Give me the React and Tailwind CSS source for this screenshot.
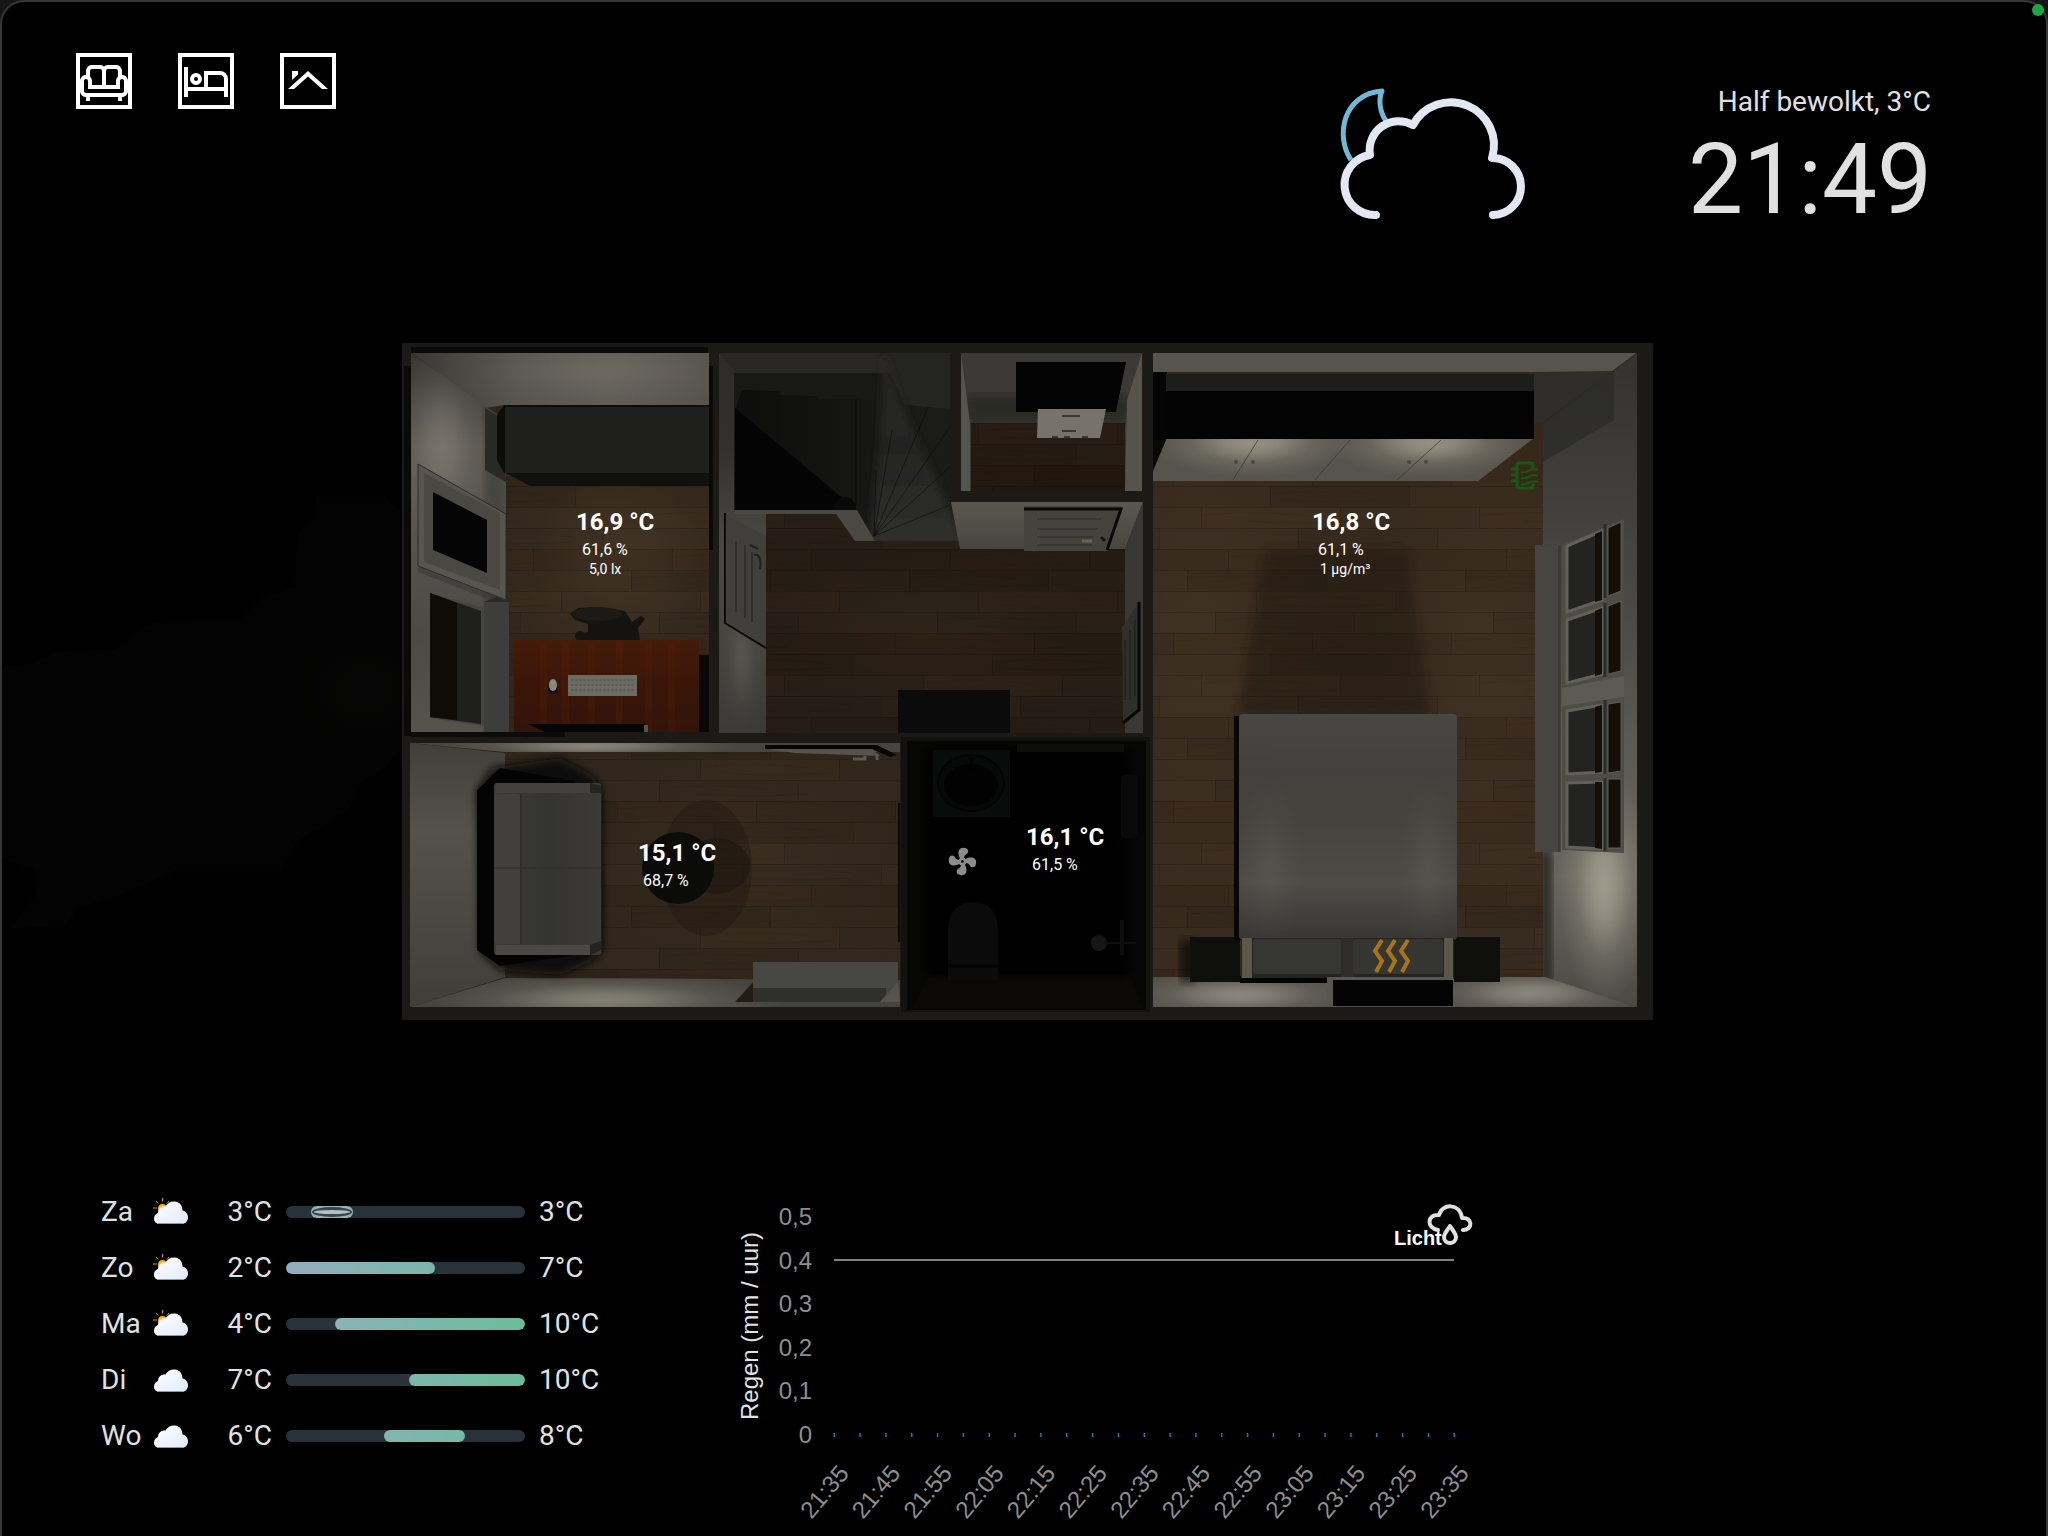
import React from "react";

const SOFA =
  "M21 9V7C21 5.35 19.65 4 18 4H14C13.23 4 12.53 4.3 12 4.78C11.47 4.3 10.77 4 10 4H6C4.35 4 3 5.35 3 7V9C1.35 9 0 10.35 0 12V17C0 18.65 1.35 20 3 20V22H5V20H19V22H21V20C22.65 20 24 18.65 24 17V12C24 10.35 22.65 9 21 9M14 6H18C18.55 6 19 6.45 19 7V9.78C18.39 10.33 18 11.12 18 12V14H13V7C13 6.45 13.45 6 14 6M5 7C5 6.45 5.45 6 6 6H10C10.55 6 11 6.45 11 7V14H6V12C6 11.12 5.61 10.33 5 9.78V7M22 17C22 17.55 21.55 18 21 18H3C2.45 18 2 17.55 2 17V12C2 11.45 2.45 11 3 11C3.55 11 4 11.45 4 12V16H20V12C20 11.45 20.45 11 21 11C21.55 11 22 11.45 22 12V17Z";
const BED =
  "M7 14A3 3 0 1 0 4 11A3 3 0 0 0 7 14M7 10A1 1 0 1 1 6 11A1 1 0 0 1 7 10M19 7H11V15H3V5H1V20H3V17H21V20H23V11A4 4 0 0 0 19 7M21 15H13V9H19A2 2 0 0 1 21 11Z";
const ROOF = "M12 7L2 16H5L12 9.7L19 16H22L12 7M7 7V8.8L4 11.5V7H7Z";
const FAN =
  "M12 11A1 1 0 0 0 11 12A1 1 0 0 0 12 13A1 1 0 0 0 13 12A1 1 0 0 0 12 11M12.5 2C17 2 17.11 5.57 14.75 6.75C13.76 7.24 13.32 8.29 13.13 9.22C13.61 9.42 14.03 9.73 14.35 10.13C18.05 8.13 22.03 8.92 22.03 12.5C22.03 17 18.46 17.1 17.28 14.73C16.78 13.74 15.72 13.3 14.79 13.11C14.59 13.59 14.28 14 13.88 14.34C15.87 18.03 15.08 22 11.5 22C7 22 6.91 18.42 9.27 17.24C10.25 16.75 10.69 15.71 10.89 14.79C10.4 14.59 9.97 14.27 9.65 13.87C5.96 15.85 2 15.07 2 11.5C2 7 5.56 6.89 6.74 9.26C7.24 10.25 8.29 10.68 9.22 10.87C9.41 10.39 9.73 9.97 10.14 9.65C8.15 5.96 8.94 2 12.5 2Z";

const NAV = [
  { label: "Woonkamer", d: SOFA },
  { label: "Slaapkamer", d: BED },
  { label: "Zolder", d: ROOF },
];

function Header() {
  return (
    <header className="flex items-start pt-[51px] pl-[74px] pr-[115px]">
      <nav className="flex gap-[46px]">
        {NAV.map((n) => (
          <button key={n.label} type="button" aria-label={n.label} className="size-14 border-4 border-white text-white">
            <svg viewBox="0 0 24 24" className="size-12" fill="currentColor">
              <path d={n.d} fillRule="evenodd" />
            </svg>
          </button>
        ))}
      </nav>
      <div className="mt-[29px] ml-auto flex items-start">
        <svg viewBox="1336 84 194 140" className="mt-0.5 h-[140px] w-[194px]" fill="none" aria-hidden="true">
          <path d="M1351 160C1335 136 1343 94 1382 91C1378 100 1380 112 1386 121" stroke="#71b7d6" strokeWidth="5" strokeLinejoin="round" />
          <path
            d="M1376 215A30.2 30.2 0 0 1 1370 155A29 29 0 0 1 1413 125A43 43 0 0 1 1492 158A28.5 28.5 0 0 1 1493 215"
            stroke="#e2e8f2"
            strokeWidth="8"
            fill="#000"
            strokeLinecap="round"
            strokeLinejoin="round"
          />
        </svg>
        <div className="ml-[158px] w-[243px] text-right text-[#e1e1e1]">
          <div className="text-[28px] leading-10 whitespace-nowrap">Half bewolkt, 3°C</div>
          <div className="text-[98px] leading-[116px] whitespace-nowrap">21:49</div>
        </div>
      </div>
    </header>
  );
}

const P = ({ p, f, ...r }) => <polygon points={p} fill={f} {...r} />;
const R = ({ b, f, ...r }) => <rect x={b[0]} y={b[1]} width={b[2] - b[0]} height={b[3] - b[1]} fill={f} {...r} />;

function Glow({ id, color, o = 1 }) {
  return (
    <radialGradient id={id}>
      <stop offset="0" stopColor={color} stopOpacity={o} />
      <stop offset="0.25" stopColor={color} stopOpacity={o * 0.8} />
      <stop offset="0.6" stopColor={color} stopOpacity={o * 0.28} />
      <stop offset="1" stopColor={color} stopOpacity="0" />
    </radialGradient>
  );
}

function Linear({ id, v, stops }) {
  return (
    <linearGradient id={id} x1="0" y1="0" x2={v ? 0 : 1} y2={v ? 1 : 0}>
      {stops.map((s, i) => (
        <stop key={i} offset={i / (stops.length - 1)} stopColor={s} />
      ))}
    </linearGradient>
  );
}

const ROWS = [0, 97, 28, 125, 55, 14, 83, 42];

function Defs() {
  return (
    <defs>
      <pattern id="planks" x="1173" y="465" width="278" height="168" patternUnits="userSpaceOnUse">
        {ROWS.map((x, i) => (
          <g key={i}>
            <rect x="0" y={i * 21} width="278" height="21" fill="#fff" opacity={((i * 5) % 4) * 0.007} />
            <rect x={x} y={i * 21} width="139" height="21" fill={i % 2 ? "#000" : "#b86a20"} opacity={i % 2 ? 0.06 : 0.02} />
            <rect x="0" y={i * 21} width="278" height="1" fill="#000" opacity="0.16" />
            <rect x={x} y={i * 21} width="1" height="21" fill="#000" opacity="0.16" />
            <rect x={x + 139} y={i * 21} width="1" height="21" fill="#000" opacity="0.16" />
            <path d={`M${x} ${i * 21 + 8}q60 -5 110 1M${x / 2 + 60} ${i * 21 + 14}q50 4 110 0`} stroke="#000" strokeOpacity="0.08" fill="none" />
          </g>
        ))}
      </pattern>
      <Glow id="gWall" color="#8b877c" />
      <Glow id="gBright" color="#a5a192" />
      <Glow id="gFloor" color="#53402a" o={0.5} />
      <Glow id="gHaze" color="#0c0b09" o={0.9} />
      <Linear id="lBack" stops={["#3a3935", "#55534c", "#5f5c55", "#55534c"]} />
      <Linear id="lLeft" v stops={["#363531", "#5a5750", "#55534d", "#4c4a45", "#55534c"]} />
      <Linear id="lHallL" v stops={["#2d2c28", "#32312d", "#4a4842", "#45443f", "#3b3a36"]} />
      <Linear id="lStair" stops={["#0d0d0d", "#121211", "#181817", "#1c1c1a"]} />
      <Linear id="lBeam" v stops={["#2a2926", "#242422", "#30302d"]} />
      <Linear id="lLivL" v stops={["#403f3a", "#55524b", "#4a4842", "#3f3e38"]} />
      <Linear id="lRight" v stops={["#33322f", "#3f3e3b", "#4b4a46", "#5c5a54", "#68655d", "#4b4943"]} />
      <Linear id="lBed" v stops={["#484743", "#42413d", "#45443f", "#4e4c47", "#383733"]} />
      <Linear id="lSofa" stops={["#3c3b37", "#343430", "#3b3a36"]} />
      <Linear id="lDesk" v stops={["#451b09", "#3a1608", "#33130a"]} />
      <Linear id="lDim" v stops={["#5b584f", "#47453f"]} />
      <clipPath id="cOffice"><path d="M411 353H709V732H411Z" /></clipPath>
      <clipPath id="cBedroom"><path d="M1153 353H1637V1007H1153Z" /></clipPath>
      <clipPath id="cLiving"><path d="M410 743H900V1007H410Z" /></clipPath>
      <clipPath id="cLivingLow"><path d="M410 1007L505 978H900V1007Z" /></clipPath>
      <clipPath id="cLivingTop"><path d="M410 743H900V752H505Z" /></clipPath>
      <clipPath id="cBedLow"><path d="M1153 977H1545L1637 1007H1153Z" /></clipPath>
      <clipPath id="cCloset"><path d="M1166 439H1533L1478 481H1153V472Z" /></clipPath>
      <clipPath id="cBack"><path d="M412 353H709V405H504L485 408Z" /></clipPath>
      <clipPath id="cLeft"><path d="M411 353L485 406L506 420V732H411Z" /></clipPath>
      <clipPath id="cRight"><path d="M1637 353L1543 423V977L1637 1007Z" /></clipPath>
      <clipPath id="cStair"><path d="M719 353H950V505L960 541H875L857 510H719Z" /></clipPath>
      <filter id="soft"><feGaussianBlur stdDeviation="4" /></filter>
    </defs>
  );
}

function Office() {
  return (
    <g clipPath="url(#cOffice)">
      <R b={[411, 353, 709, 732]} f="#2f2419" />
      <ellipse cx="620" cy="560" rx="140" ry="150" fill="url(#gFloor)" opacity="0.8" />
      <R b={[500, 460, 709, 732]} f="url(#planks)" />
      <P p="412,353 709,353 709,405 504,405 485,408" f="url(#lBack)" />
      <g clipPath="url(#cBack)">
        <ellipse cx="600" cy="372" rx="170" ry="40" fill="url(#gWall)" opacity="0.3" />
      </g>
      <P p="411,353 485,406 506,420 506,732 411,732" f="url(#lLeft)" />
      <g clipPath="url(#cLeft)">
        <ellipse cx="442" cy="448" rx="50" ry="110" fill="url(#gWall)" opacity="0.6" />
        <R b={[485, 400, 506, 732]} f="#2a2926" opacity="0.35" filter="url(#soft)" />
      </g>
      <P p="485,408 504,420 506,482 485,470" f="#2a2927" />
      <P p="497,415 504,405 709,405 709,473 504,473 497,460" f="#0c0c0b" />
      <R b={[505, 407, 709, 473]} f="#1f1f1e" />
      <P p="506,473 709,473 709,486 530,486" f="#10100f" />
      <P p="418,464 506,514 506,600 418,566" f="#58554e" stroke="#2b2a27" strokeWidth="1" />
      <P p="424,473 500,513 500,590 424,562" f="#4a4842" />
      <P p="433,492 487,520 487,573 433,550" f="#050505" />
      <P p="418,566 506,600 506,606 418,572" f="#333" opacity="0.5" />
      <P p="430,593 484,608 484,726 430,718" f="#45443f" />
      <P p="430,593 481,611 481,724 430,717" f="#1f1f1e" />
      <P p="430,593 457,603 457,720 430,717" f="#0f0c08" />
      <R b={[484, 602, 509, 732]} f="#3d3d3b" />
      <P p="484,602 496,597 509,602" f="#2b2a28" />
      <P p="570,614 578,608 600,607 625,611 632,622 641,616 645,619 638,628 640,640 577,640 577,634 588,632 588,624 575,620" f="#15130f" />
      <ellipse cx="597" cy="614" rx="25" ry="7" fill="#1b1a17" />
      <ellipse cx="580" cy="636" rx="5" ry="5" fill="#15130f" />
      <R b={[514, 640, 699, 732]} f="url(#lDesk)" />
      {[540, 562, 588, 616, 645, 668].map((x) => (
        <R key={x} b={[x, 641, x + 7, 732]} f="#5c250c" opacity="0.18" />
      ))}
      <R b={[699, 655, 709, 732]} f="#0a0806" />
      <P p="528,724 645,724 648,732 545,732" f="#060504" />
      <R b={[644, 725, 648, 732]} f="#555" />
      <ellipse cx="553" cy="690" rx="5" ry="4" fill="#111" />
      <ellipse cx="553" cy="685" rx="4" ry="6" fill="#8b8984" />
      <R b={[568, 675, 637, 696]} f="#6c6a65" />
      {[680, 685, 690].map((y) => (
        <path key={y} d={`M571 ${y}H634`} stroke="#55534f" strokeDasharray="3 1" />
      ))}
    </g>
  );
}

function Hall() {
  return (
    <g>
      <R b={[719, 353, 1143, 733]} f="#241b12" />
      <ellipse cx="930" cy="630" rx="170" ry="90" fill="url(#gFloor)" opacity="0.25" />
      <R b={[760, 510, 1130, 733]} f="url(#planks)" />
      <g clipPath="url(#cStair)">
        <R b={[719, 353, 960, 545]} f="#1a1a18" />
        <R b={[719, 353, 950, 373]} f="#282724" />
        <P p="735,373 880,373 895,410 735,410" f="#181817" />
        <P p="735,410 742,390 780,391 781,395 818,396 819,399 856,399 891,402 928,407 950,409 960,545 735,545" f="url(#lStair)" />
        <P p="880,353 950,353 950,409 905,405" f="#242421" />
        <P p="884,353 900,400 965,545 870,545 880,440" f="url(#lBeam)" filter="url(#soft)" />
        {[[950, 505], [950, 467], [950, 427], [928, 407], [892, 430], [876, 470]].map(([x, y]) => (
          <path key={`${x}-${y}`} d={`M874 536L${x} ${y}`} stroke="#0c0c0c" strokeOpacity="0.6" strokeWidth="1" />
        ))}
        <path d="M856 399V505" stroke="#0c0c0c" />
        <P p="735,408 845,500 857,510 735,510" f="#040404" />
        <circle cx="845" cy="508" r="11" fill="#090909" />
      </g>
      <P p="719,353 734,370 734,510 766,514 766,733 719,733" f="url(#lHallL)" />
      <ellipse cx="742" cy="660" rx="22" ry="70" fill="url(#gWall)" opacity="0.25" />
      <P p="735,510 857,510 875,541 855,541 836,514 735,514" f="#4a4843" />
      <P p="727,516 766,536 766,646 727,622" f="#403f3b" />
      <path d="M725 513V623L766 648" fill="none" stroke="#0b0b0a" strokeWidth="2" />
      <path d="M736 541V612M745 545V618M752 552V622" stroke="#22211f" strokeWidth="1" />
      <path d="M750 545l8 4M754 555q8 -2 6 14" stroke="#22211f" strokeWidth="2" fill="none" />
      <P p="951,502 1143,502 1125,549 960,549" f="url(#lDim)" />
      <P p="1024,506 1122,506 1108,551 1024,551" f="#45433e" />
      <path d="M1024 509H1121L1107 550" fill="none" stroke="#080807" strokeWidth="3" />
      <path d="M1037 519H1101M1037 529H1098M1037 537H1094M1037 545H1092" stroke="#2c2b28" strokeWidth="1" />
      <path d="M1082 541h10" stroke="#66635b" strokeWidth="3" />
      <path d="M1101 537l4 4" stroke="#161614" strokeWidth="3" />
      <P p="1143,502 1125,549 1125,733 1143,733" f="#393834" />
      <P p="1122,627 1138,604 1138,711 1123,722" f="#2f2f2c" />
      <path d="M1139 602V710L1123 723" fill="none" stroke="#060606" strokeWidth="3" />
      <path d="M1125 640V700M1130 630V700M1135 620V696" stroke="#1a1a18" />
      <R b={[898, 690, 1010, 733]} f="#0b0b0b" />

      <R b={[950, 343, 961, 502]} f="#1b1a16" />
      <R b={[950, 491, 1153, 502]} f="#1b1a16" />
      <R b={[961, 353, 1142, 491]} f="#3a3935" />
      <R b={[965, 395, 1130, 423]} f="#22211f" opacity="0.6" filter="url(#soft)" />
      <R b={[971, 423, 1125, 491]} f="#21170e" />
      <R b={[971, 423, 1125, 491]} f="url(#planks)" />
      <P p="961,353 970,423 970,491 961,491" f="#55534d" />
      <P p="1142,353 1127,400 1125,491 1142,491" f="#55534c" />
      <P p="1016,362 1126,362 1116,412 1016,412" f="#040404" />
      <P p="1038,409 1106,409 1100,438 1037,438" f="#77736b" />
      <path d="M1062 416h18M1062 431h14M1052 437h6M1064 437h6M1082 437h6" stroke="#3b3830" strokeWidth="2" />
    </g>
  );
}

function WindowPane({ a, mid, b }) {
  return (
    <g>
      <P p={a} f="#232321" stroke="#62605a" strokeWidth="3" />
      <P p={mid} f="#140f09" />
      <P p={b} f="#140f09" stroke="#5c5a54" strokeWidth="1" />
    </g>
  );
}

function Bedroom() {
  return (
    <g clipPath="url(#cBedroom)">
      <R b={[1153, 353, 1637, 1007]} f="#35281b" />
      <ellipse cx="1200" cy="640" rx="130" ry="300" fill="url(#gFloor)" opacity="0.4" />
      <ellipse cx="1490" cy="680" rx="120" ry="300" fill="url(#gFloor)" opacity="0.4" />
      <R b={[1153, 480, 1546, 978]} f="url(#planks)" />
      <P p="1265,550 1407,550 1430,716 1238,716" f="#1d160f" opacity="0.45" filter="url(#soft)" />
      <P p="1153,353 1637,353 1614,372 1153,372" f="#57544d" />
      <P p="1534,372 1614,371 1542,423 1534,423" f="#2e2d2a" />
      <R b={[1153, 372, 1167, 440]} f="#050505" />
      <R b={[1166, 374, 1534, 391]} f="#1e1d1b" />
      <R b={[1166, 391, 1534, 439]} f="#030303" />
      <P p="1166,439 1533,439 1478,481 1153,481 1153,472" f="#57544d" />
      <g clipPath="url(#cCloset)">
        <ellipse cx="1252" cy="443" rx="100" ry="34" fill="url(#gBright)" opacity="0.8" />
        <ellipse cx="1430" cy="443" rx="100" ry="34" fill="url(#gBright)" opacity="0.8" />
      </g>
      <P p="1153,440 1166,440 1153,470" f="#0b0906" />
      <path d="M1258 440L1233 480M1350 440L1315 480M1441 440L1397 480" stroke="#35332e" strokeOpacity="0.7" />
      {[1236, 1253, 1409, 1426].map((x) => (
        <circle key={x} cx={x} cy="462" r="2" fill="#4b4842" />
      ))}
      <g clipPath="url(#cRight)">
        <R b={[1543, 353, 1637, 1007]} f="url(#lRight)" />
        <P p="1543,423 1614,371 1614,420 1543,462" f="#2a2927" opacity="0.7" />
        <ellipse cx="1604" cy="885" rx="46" ry="120" fill="url(#gBright)" opacity="0.9" />
        <R b={[1540, 850, 1552, 985]} f="#2a2926" filter="url(#soft)" />
      </g>
      <path d="M1637 353L1543 423" stroke="#2a2926" />
      <P p="1562,545 1624,519 1624,853 1562,850" f="#4e4c47" />
      <R b={[1535, 545, 1560, 852]} f="#464541" />
      <R b={[1558, 545, 1561, 852]} f="#35342f" opacity="0.6" />
      <WindowPane a="1567,546 1602,531 1602,600 1567,612" mid="1595,534 1602,531 1602,600 1595,602" b="1608,528 1621,522 1621,591 1608,596" />
      <WindowPane a="1567,620 1602,608 1602,674 1567,683" mid="1595,611 1602,608 1602,674 1595,676" b="1608,606 1621,601 1621,671 1608,674" />
      <P p="1562,688 1624,676 1624,697 1562,706" f="#5c5a54" />
      <WindowPane a="1567,711 1602,705 1602,772 1567,774" mid="1595,707 1602,705 1602,772 1595,773" b="1608,704 1621,702 1621,771 1608,773" />
      <WindowPane a="1567,783 1602,782 1602,849 1567,847" mid="1595,782 1602,782 1602,849 1595,848" b="1608,779 1621,779 1621,848 1608,848" />
      <path d="M1605 524V598M1605 603V677M1605 700V774M1605 778V851" stroke="#2c2c2a" strokeWidth="3" />
      <P p="1153,977 1545,977 1637,1007 1153,1007" f="#504d47" />
      <g clipPath="url(#cBedLow)">
        <ellipse cx="1240" cy="995" rx="120" ry="26" fill="url(#gWall)" />
        <ellipse cx="1530" cy="993" rx="110" ry="26" fill="url(#gWall)" />
      </g>
      <R b={[1180, 940, 1195, 982]} f="#000" opacity="0.6" filter="url(#soft)" />
      <R b={[1190, 937, 1240, 982]} f="#0f0f0e" />
      <R b={[1454, 937, 1500, 982]} f="#0f0f0e" />
      <R b={[1234, 716, 1242, 940]} f="#080706" />
      <R b={[1239, 714, 1457, 940]} f="url(#lBed)" rx="4" />
      <ellipse cx="1270" cy="865" rx="32" ry="90" fill="url(#gWall)" opacity="0.14" />
      <ellipse cx="1428" cy="865" rx="28" ry="90" fill="url(#gWall)" opacity="0.14" />
      <R b={[1240, 976, 1340, 983]} f="#030303" />
      <R b={[1241, 938, 1454, 978]} f="#25241f" />
      <R b={[1242, 938, 1252, 978]} f="#5c5849" />
      <R b={[1444, 938, 1453, 978]} f="#5c5849" />
      <R b={[1253, 939, 1342, 974]} f="#363633" rx="3" />
      <R b={[1353, 939, 1443, 974]} f="#353531" rx="3" />
      <R b={[1341, 938, 1353, 978]} f="#2f2d29" />
      <P p="1327,977 1453,977 1453,1005 1333,1005 1327,1002" f="#57554f" />
      <R b={[1333, 980, 1453, 1006]} f="#040404" />
    </g>
  );
}

function Living() {
  return (
    <g clipPath="url(#cLiving)">
      <R b={[410, 743, 900, 1007]} f="#2d2318" />
      <ellipse cx="740" cy="860" rx="220" ry="160" fill="url(#gFloor)" opacity="0.4" />
      <R b={[500, 750, 900, 982]} f="url(#planks)" />
      <P p="410,743 900,743 900,752 505,752" f="#47453f" />
      <g clipPath="url(#cLivingTop)">
        <ellipse cx="590" cy="746" rx="150" ry="14" fill="url(#gBright)" opacity="0.7" />
      </g>
      <P p="410,743 505,753 505,977 410,1007" f="url(#lLivL)" />
      <P p="410,1007 505,978 900,980 900,1007" f="#45433d" />
      <g clipPath="url(#cLivingLow)">
        <ellipse cx="605" cy="1000" rx="180" ry="28" fill="url(#gBright)" opacity="0.65" />
      </g>
      <P p="477,790 492,768 560,758 592,775 602,790 602,950 590,962 560,975 500,970 480,952" f="#0e0b08" filter="url(#soft)" />
      <P p="477,790 500,768 575,781 575,955 500,966 477,950" f="#030303" />
      <R b={[494, 783, 601, 955]} f="url(#lSofa)" rx="3" />
      <R b={[496, 783, 590, 793]} f="#42413d" />
      <R b={[496, 945, 590, 955]} f="#494843" />
      <P p="590,783 601,786 601,793 590,793" f="#242422" />
      <P p="590,945 601,941 601,950 590,955" f="#242422" />
      <R b={[494, 794, 521, 944]} f="#41403c" rx="4" />
      <path d="M494 868H601" stroke="#2d2d2a" />
      <path d="M521 794V944" stroke="#2e2e2b" strokeWidth="2" />
      <ellipse cx="706" cy="868" rx="46" ry="68" fill="#1c150f" opacity="0.35" />
      <ellipse cx="716" cy="866" rx="34" ry="28" fill="#120e0a" opacity="0.35" />
      <circle cx="678" cy="868" r="36" fill="#0b0b0a" />
      <P p="765,745 877,745 897,755 890,757 872,749 765,749" f="#060606" />
      <P p="765,749 872,749 880,756 795,753" f="#55534e" />
      <path d="M853 759h12v-3M877 754v6" stroke="#5b5952" strokeWidth="3" fill="none" />
      <R b={[898, 803, 900, 942]} f="#0a0a09" />
      <P p="735,1002 755,980 755,1002" f="#241c12" />
      <R b={[753, 962, 898, 988]} f="#474743" />
      <R b={[753, 988, 886, 1002]} f="#2f2f2c" />
      <P p="880,1002 898,982 900,1002" f="#55534c" />
    </g>
  );
}

function Bathroom() {
  return (
    <g>
      <R b={[901, 737, 1150, 1012]} f="#12120f" />
      <R b={[907, 741, 1146, 1010]} f="#060605" />
      <P p="912,1008 930,975 1130,975 1142,1008" f="#0a0906" />
      <R b={[926, 748, 1128, 976]} f="#010101" filter="url(#soft)" />
      <R b={[933, 750, 1010, 817]} f="#0a0c0c" />
      <ellipse cx="971" cy="783" rx="33" ry="28" fill="#070808" stroke="#030303" strokeWidth="2" />
      <ellipse cx="971" cy="785" rx="27" ry="21" fill="#020202" />
      <path d="M971 757V772" stroke="#010101" strokeWidth="4" />
      <R b={[1017, 744, 1124, 752]} f="#0d0d0c" />
      <R b={[1121, 775, 1137, 838]} f="#090909" rx="3" />
      <path d="M948 980V928Q950 903 973 902Q997 903 998 928V980Z" fill="#0b0b0b" />
      <path d="M948 966H998" stroke="#030303" strokeWidth="3" />
      <circle cx="1099" cy="943" r="8" fill="#161616" />
      <path d="M1105 943H1136" stroke="#0f0f0f" strokeWidth="2" />
      <path d="M1122 920V955" stroke="#0d0d0d" strokeWidth="4" />
    </g>
  );
}

function FloorPlan() {
  return (
    <svg viewBox="2 330 2044 700" className="block w-full" aria-label="Plattegrond" role="img">
      <Defs />
      <path
        d="M2 667L34 663L55 652L115 649L150 623L240 620L262 598L295 587L297 532L314 520L316 497H385L400 510V750L385 768L362 782L350 808L297 842L280 871H175L115 897L78 908L65 927L10 928L36 895L34 870L2 858Z"
        fill="#030303"
      />
      <ellipse cx="365" cy="690" rx="110" ry="90" fill="url(#gHaze)" opacity="0.4" />
      <R b={[402, 343, 1653, 1020]} f="#1b1a16" />
      <R b={[411, 347, 708, 354]} f="#0a0a08" />
      <R b={[404, 366, 411, 736]} f="#0a0a09" />
      <R b={[709, 366, 713, 550]} f="#090908" />
      <R b={[411, 732, 565, 737]} f="#0b0b0a" />
      <Office />
      <Hall />
      <Bedroom />
      <Living />
      <Bathroom />
      <g fill="none" stroke="#155a10" strokeWidth="3">
        <path d="M1533 468V465Q1533 463 1531 463H1519Q1517 463 1517 465V486Q1517 488 1519 488H1531Q1533 488 1533 486V484" />
        <path d="M1511 469h5M1511 475h5M1511 481h5" />
        <path d="M1521 472c7 2 8 -5 17 -2M1521 478c7 2 8 -5 17 -2M1521 484c7 2 8 -5 17 -2" strokeWidth="2" />
      </g>
      <path
        d="M1382 940L1375 951L1382 961L1376 972M1395 940L1388 951L1395 961L1389 972M1408 940L1401 951L1408 961L1402 972"
        fill="none"
        stroke="#a87516"
        strokeWidth="4"
      />
      <path d={FAN} fill="#8c8c8c" transform="translate(946 845) scale(1.37)" />
    </svg>
  );
}

/* Sensor read-outs pinned on the floor plan: x is the left edge, y the vertical centre of the text. */
const READINGS = [
  { t: "16,9 °C", x: 576, y: 522, big: true },
  { t: "61,6 %", x: 582, y: 550 },
  { t: "5,0 lx", x: 589, y: 569, small: true },
  { t: "16,8 °C", x: 1312, y: 522, big: true },
  { t: "61,1 %", x: 1318, y: 550 },
  { t: "1 µg/m³", x: 1320, y: 569, small: true },
  { t: "15,1 °C", x: 638, y: 853, big: true },
  { t: "68,7 %", x: 643, y: 881 },
  { t: "16,1 °C", x: 1026, y: 837, big: true },
  { t: "61,5 %", x: 1032, y: 865 },
];

function Plan() {
  return (
    <section className="relative mt-[92px]">
      <FloorPlan />
      {READINGS.map((r) => (
        <span
          key={r.t}
          className={
            "absolute -translate-y-1/2 leading-none whitespace-nowrap text-white " +
            (r.big ? "text-2xl font-bold" : r.small ? "text-sm" : "text-base")
          }
          style={{ left: `${((r.x - 2) / 2044) * 100}%`, top: `${((r.y - 330) / 700) * 100}%` }}
        >
          {r.t}
        </span>
      ))}
    </section>
  );
}

function WeatherIcon({ sun }) {
  return (
    <svg viewBox="0 0 36 28" className="h-7 w-9" aria-hidden="true">
      {sun && (
        <g>
          <path d="M9.500 0v3.500M3 3l2 2.500M0 10h4M16 3l-2 2.500" stroke="#d99a12" strokeWidth="1" />
          <circle cx="9.500" cy="10.500" r="4.500" fill="#f9b61d" />
        </g>
      )}
      <path
        d="M6.500 26C3 26 1 23.500 1 20.500C1 17.500 3 15.500 5 15C5 10.500 8.500 8 12.500 8.500C14.500 5 18 3 22 3.500C26.500 4 29.500 7.500 29.500 12.500C33 13 35 16 35 19.500C35 23.500 32 26 28.500 26Z"
        fill="url(#cloudFill)"
      />
      <path d="M5 25.500H30" stroke="#8f98a8" strokeWidth="1" />
      <defs>
        <linearGradient id="cloudFill" x1="0" y1="0" x2="1" y2="1">
          <stop offset="0" stopColor="#fff" />
          <stop offset="0.5" stopColor="#f0f4ff" />
          <stop offset="1" stopColor="#dfe9fb" />
        </linearGradient>
      </defs>
    </svg>
  );
}

const DAYS = [
  { d: "Za", sun: true, lo: "3°C", hi: "3°C", from: 10.5, to: 28 },
  { d: "Zo", sun: true, lo: "2°C", hi: "7°C", from: 0, to: 62.3, c: ["#92aebf", "#7ab6aa"] },
  { d: "Ma", sun: true, lo: "4°C", hi: "10°C", from: 20.5, to: 100, c: ["#8ab3b7", "#6cbc9c"] },
  { d: "Di", sun: false, lo: "7°C", hi: "10°C", from: 51.5, to: 100, c: ["#7db6ac", "#6cbc9c"] },
  { d: "Wo", sun: false, lo: "6°C", hi: "8°C", from: 41, to: 75, c: ["#81b6af", "#76b8a6"] },
];

function Forecast() {
  return (
    <ul className="flex w-[520px] flex-col gap-6 pt-[166px] text-[28px] leading-8 text-[#e1e1e1]">
      {DAYS.map((r) => (
        <li key={r.d} className="grid grid-cols-[52px_36px_83px_239px_auto] items-center">
          <span>{r.d}</span>
          <WeatherIcon sun={r.sun} />
          <span className="text-right">{r.lo}</span>
          <div className="relative ml-3.5 h-3 w-[239px] overflow-hidden rounded-full bg-[#283238]">
            <div
              className="absolute inset-y-0 flex items-center justify-center rounded-full"
              style={{
                left: `${r.from}%`,
                width: `${r.to - r.from}%`,
                background: r.c ? `linear-gradient(90deg, ${r.c[0]}, ${r.c[1]})` : "#8fb6bd",
              }}
            >
              {!r.c && (
                <div className="flex h-2.5 w-10 items-center justify-center rounded-[50%] bg-[#3a4446]">
                  <div className="h-1 w-9 rounded-[50%] bg-[#b4c0c0]" />
                </div>
              )}
            </div>
          </div>
          <span className="pl-7">{r.hi}</span>
        </li>
      ))}
    </ul>
  );
}

const TIMES = ["21:35", "21:45", "21:55", "22:05", "22:15", "22:25", "22:35", "22:45", "22:55", "23:05", "23:15", "23:25", "23:35"];
const LEVELS = ["0,5", "0,4", "0,3", "0,2", "0,1", "0"];

function RainChart() {
  return (
    <svg
      viewBox="730 1190 760 340"
      className="mt-40 h-[340px] w-[760px] shrink-0 font-['Liberation_Sans',sans-serif]"
      role="img"
      aria-label="Regen (mm / uur)"
    >
      <text transform="translate(758 1326) rotate(-90)" textAnchor="middle" fontSize="24" fill="#e1e1e1">
        Regen (mm / uur)
      </text>
      {LEVELS.map((l, i) => (
        <text key={l} x="812" y={1225 + i * 43.6} textAnchor="end" fontSize="24" fill="#8e8e8e">
          {l}
        </text>
      ))}
      <path d="M834 1260H1454" stroke="#808080" strokeWidth="2" />
      {Array.from({ length: 25 }, (_, i) => (
        <rect key={i} x={833.5 + (i * 620) / 24} y="1433" width="1.500" height="4" fill="#0b7fbd" />
      ))}
      {TIMES.map((t, i) => (
        <text
          key={t}
          transform={`translate(${850 + (i * 620) / 12} 1474) rotate(-50)`}
          textAnchor="end"
          fontSize="24"
          fill="#8e8e8e"
        >
          {t}
        </text>
      ))}
      <text x="1394" y="1245" fontSize="20" fontWeight="bold" fill="#fff">
        Licht
      </text>
      <g fill="none" stroke="#e1e1e1" strokeWidth="4" strokeLinecap="round" strokeLinejoin="round">
        <path d="M1438 1230C1426 1228 1427 1214 1439 1215C1442 1203 1460 1203 1462 1218C1473 1217 1473 1230 1463 1230" />
        <path d="M1450 1226C1446 1232 1444 1234 1444 1237A6 6 0 0 0 1456 1237C1456 1234 1454 1232 1450 1226Z" />
      </g>
    </svg>
  );
}

export default function App() {
  return (
    <div className="relative min-h-screen bg-[#151515] font-[Roboto,sans-serif]">
      <main className="min-h-screen overflow-hidden rounded-t-[24px] border-2 border-b-0 border-[#363636] bg-black">
        <Header />
        <Plan />
        <section className="flex items-start gap-[109px] pl-[99px]">
          <Forecast />
          <RainChart />
        </section>
      </main>
      <span className="absolute top-1 right-1 size-3 rounded-full bg-[#1fa344]" />
    </div>
  );
}
